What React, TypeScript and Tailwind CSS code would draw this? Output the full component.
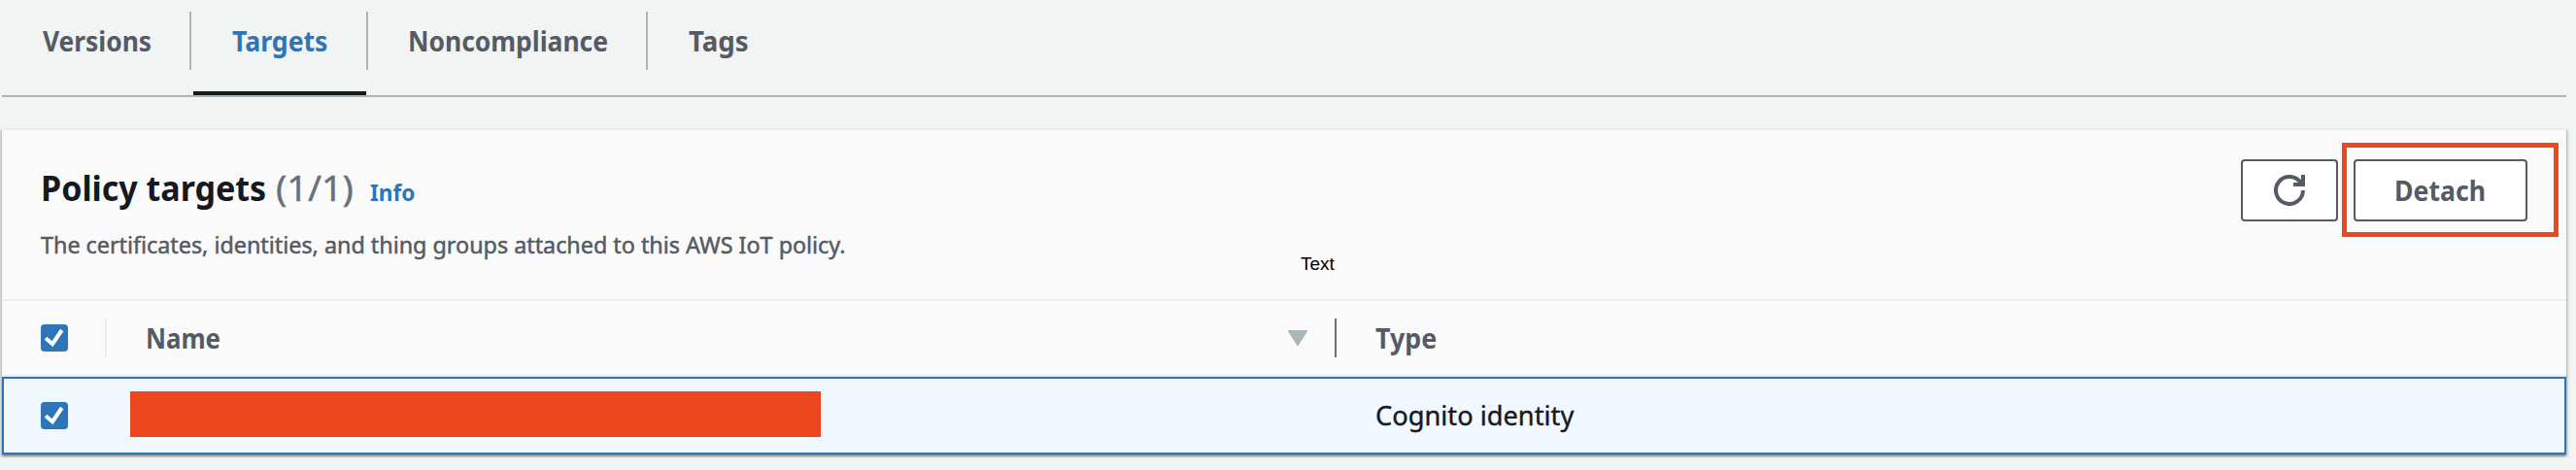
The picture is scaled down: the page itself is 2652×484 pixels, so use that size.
import type { ReactNode } from "react";

function Label({ className, children }: { className: string; children: ReactNode }) {
  return <span className={"inline-block origin-left whitespace-nowrap " + className}>{children}</span>;
}

function Checkbox() {
  return (
    <span className="flex size-7 shrink-0 items-center justify-center rounded-[4px] bg-[#2e74b8]">
      <svg width="28" height="28" viewBox="0 0 28 28" fill="none">
        <path d="M5 14.2 L12 20.2 L21.7 6" stroke="#fff" strokeWidth="4" />
      </svg>
    </span>
  );
}

function RefreshIcon() {
  return (
    <svg width="32" height="32" viewBox="0 0 32 32" fill="none" stroke="#545b64" strokeWidth="4">
      <path d="M30 16A14 14 0 1 1 28 8.8" />
      <path d="M20 10H30V0" />
    </svg>
  );
}

export default function App() {
  return (
    <div className="h-[484px] w-full overflow-hidden bg-[#f2f3f3] pl-[2px] font-['Noto_Sans',sans-serif] text-[28px] leading-[40px] text-[#545b64]">
      <nav className="flex h-[100px] w-[2640px] border-b-2 border-[#aab7b8] pt-3 font-bold">
        <div className="h-[60px] w-[195px] border-r-2 border-[#aab7b8] pl-[42px] pt-[10px]">
          <Label className="scale-x-[0.941]">Versions</Label>
        </div>
        <div className="flex w-[182px] flex-col">
          <div className="h-[60px] border-r-2 border-[#aab7b8] pl-[42px] pt-[10px] text-[#2e74b8]">
            <Label className="scale-x-[0.951]">Targets</Label>
          </div>
          <div className="mt-auto ml-[2px] mr-[2px] h-1 bg-[#16191f]" />
        </div>
        <div className="h-[60px] w-[288px] border-r-2 border-[#aab7b8] pl-[41px] pt-[10px]">
          <Label className="scale-x-[0.944]">Noncompliance</Label>
        </div>
        <div className="pl-[42px] pt-[10px]">
          <Label className="scale-x-[0.985]">Tags</Label>
        </div>
      </nav>

      <section className="mt-8 w-[2640px] bg-[#fafafa] shadow-[0_2px_2px_0_rgba(0,28,36,0.3),2px_2px_2px_0_rgba(0,28,36,0.15),-2px_2px_2px_0_rgba(0,28,36,0.15)]">
        <header className="flex h-[178px] border-y-2 border-[#eaeded]">
          <div className="w-[1337px] pl-10 pt-[38px]">
            <div className="flex items-baseline text-[36px] leading-[44px]">
              <h2 className="w-[242px] font-bold text-[#16191f]">
                <Label className="scale-x-[0.945]">Policy targets</Label>
              </h2>
              <span className="w-[97px] text-[#687078] [-webkit-text-stroke:0.4px_#687078]">
                <Label className="scale-x-[1.048]">(1/1)</Label>
              </span>
              <a className="text-[24px] font-bold leading-[32px] text-[#2e74b8]">
                <Label className="scale-x-[0.94]">Info</Label>
              </a>
            </div>
            <p className="mt-[20px] text-[24px] leading-[32px] [-webkit-text-stroke:0.5px_#545b64]">
              <Label className="scale-x-[0.972]">
                The certificates, identities, and thing groups attached to this AWS IoT policy.
              </Label>
            </p>
          </div>
          <p className="pt-[126px] font-['Liberation_Sans',sans-serif] text-[19px] leading-[24px] text-black">Text</p>
          <div className="mr-[8px] mt-[13px] ml-auto flex h-[97px] items-start">
            <button className="mt-[17px] mr-[4px] flex h-16 w-[100px] items-center justify-center rounded-[4px] border-2 border-[#545b64] bg-white">
              <RefreshIcon />
            </button>
            <div className="h-[97px] w-[223px] border-[5px] border-[#ec471f] pl-[7px] pt-[12px]">
              <button className="h-16 w-[179px] rounded-[4px] border-2 border-[#545b64] bg-white pl-10 pb-px text-left font-bold">
                <Label className="scale-x-[0.952]">Detach</Label>
              </button>
            </div>
          </div>
        </header>

        <div className="flex h-[78px] items-center border-b-2 border-[#eaeded] pl-10 font-bold">
          <Checkbox />
          <div className="ml-[38px] h-10 w-[2px] bg-[#eaeded]" />
          <div className="w-[1216px] pb-px pl-10">
            <Label className="scale-x-[0.922]">Name</Label>
          </div>
          <svg width="20" height="16" viewBox="0 0 20 16" fill="#aab7b8" stroke="#aab7b8" strokeWidth="2" strokeLinejoin="round">
            <path d="M1 1H19L10 15Z" />
          </svg>
          <div className="ml-7 h-10 w-[2px] bg-[#687078]" />
          <div className="pb-px pl-10">
            <Label className="scale-x-[0.957]">Type</Label>
          </div>
        </div>

        <div className="flex h-20 items-center border-2 border-[#2e74b8] bg-[#f1f8ff] pl-[38px] text-[#16191f]">
          <Checkbox />
          <div className="ml-16 mb-[3px] h-[47px] w-[711px] bg-[#ec471f]" />
          <div className="ml-[571px] pb-[2px] [-webkit-text-stroke:0.4px_#16191f]">
            <Label className="scale-x-[0.973]">Cognito identity</Label>
          </div>
        </div>
      </section>
    </div>
  );
}
